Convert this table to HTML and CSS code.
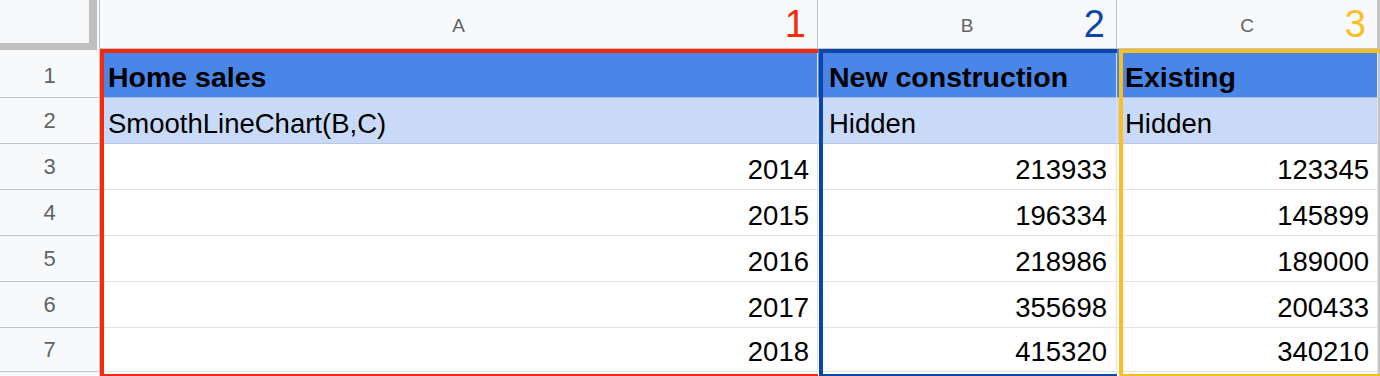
FILE: index.html
```html
<!DOCTYPE html>
<html>
<head>
<meta charset="utf-8">
<link rel="stylesheet" href="styles.css">
</head>
<body>
<div class="sheet">
  <div class="rowheads">
    <div class="corner"><div class="corner-bar"></div></div>
    <div class="rh r1">1</div>
    <div class="rh r2">2</div>
    <div class="rh r3">3</div>
    <div class="rh r4">4</div>
    <div class="rh r5">5</div>
    <div class="rh r6">6</div>
    <div class="rh r7">7</div>
    <div class="rh r8"></div>
  </div>

  <div class="col col-a">
    <div class="ch">A<span class="tag tag-red">1</span></div>
    <div class="cell r1 head">Home sales</div>
    <div class="cell r2 sub">SmoothLineChart(B,C)</div>
    <div class="cell r3 num">2014</div>
    <div class="cell r4 num">2015</div>
    <div class="cell r5 num">2016</div>
    <div class="cell r6 num">2017</div>
    <div class="cell r7 num">2018</div>
    <div class="cell r8"></div>
  </div>

  <div class="col col-b">
    <div class="ch">B<span class="tag tag-blue">2</span></div>
    <div class="cell r1 head">New construction</div>
    <div class="cell r2 sub">Hidden</div>
    <div class="cell r3 num">213933</div>
    <div class="cell r4 num">196334</div>
    <div class="cell r5 num">218986</div>
    <div class="cell r6 num">355698</div>
    <div class="cell r7 num">415320</div>
    <div class="cell r8"></div>
  </div>

  <div class="col col-c">
    <div class="ch">C<span class="tag tag-yellow">3</span></div>
    <div class="cell r1 head">Existing</div>
    <div class="cell r2 sub">Hidden</div>
    <div class="cell r3 num">123345</div>
    <div class="cell r4 num">145899</div>
    <div class="cell r5 num">189000</div>
    <div class="cell r6 num">200433</div>
    <div class="cell r7 num">340210</div>
    <div class="cell r8"></div>
  </div>

  <div class="edge"></div>
</div>
</body>
</html>
```

FILE: styles.css
```css
* { box-sizing: border-box; }

html, body {
  margin: 0;
  padding: 0;
  background: #ffffff;
  overflow: hidden;
}

body {
  width: 1380px;
  height: 376px;
  font-family: "Liberation Sans", Arial, sans-serif;
}

.sheet {
  display: flex;
  width: 1380px;
  height: 376px;
  overflow: hidden;
}

/* ---------- row headers ---------- */
.rowheads {
  width: 100px;
  flex: none;
  display: flex;
  flex-direction: column;
  background: #f8f9fa;
  border-right: 1px solid #c4c4c4;
}

.corner {
  height: 50px;
  flex: none;
  background: #f8f9fa;
}

.corner-bar {
  width: 97px;
  height: 50px;
  border-right: 8px solid #bfbfbf;
  border-bottom: 7px solid #bfbfbf;
}

.rh {
  flex: none;
  display: flex;
  align-items: center;
  justify-content: center;
  font-size: 22px;
  color: #5f6368;
  border-bottom: 1px solid #c4c4c4;
}

.rowheads .r1 { height: 48px; padding-top: 4px; }

/* ---------- shared row heights ---------- */
.r1 { height: 49px; }
.r2, .r3, .r4, .r5, .r6 { height: 46px; }
.r7 { height: 44px; }
.r8 { height: 20px; }

/* ---------- columns ---------- */
.col {
  position: relative;
  flex: none;
  display: flex;
  flex-direction: column;
}

.col-a { width: 718px; }
.col-b { width: 299px; }
.col-c { width: 261px; }

.edge {
  flex: none;
  width: 2px;
  background: #c4c4c4;
}

.ch {
  position: relative;
  height: 49px;
  flex: none;
  display: flex;
  align-items: center;
  justify-content: center;
  padding-top: 3px;
  background: #f8f9fa;
  border-right: 1px solid #c4c4c4;
  border-bottom: 1px solid #c4c4c4;
  font-size: 19px;
  color: #5f6368;
}

.tag {
  position: absolute;
  right: 11px;
  top: 2px;
  font-size: 38px;
  line-height: 44px;
}

.tag-red { color: #f7290c; }
.tag-blue { color: #0b47a8; }
.tag-yellow { color: #fbbf24; }

.cell {
  flex: none;
  display: flex;
  align-items: flex-end;
  padding: 0 8px 3px 8px;
  font-size: 27.5px;
  line-height: 32px;
  color: #000;
  background: #ffffff;
  border-bottom: 1px solid #e2e3e3;
  border-right: 1px solid #e2e3e3;
  white-space: nowrap;
}

.cell.head {
  background: #4a86e8;
  font-weight: bold;
  font-size: 28.5px;
  border-bottom-color: #a9bde0;
  padding-bottom: 4px;
}

.cell.sub {
  background: #c9daf8;
  border-bottom-color: #b9c6db;
}

.cell.num {
  justify-content: flex-end;
}

.col-b .cell { padding-left: 11px; padding-right: 9px; }
.col-c .cell { padding-left: 8px; padding-right: 8px; }

/* ---------- coloured range frames (overlay) ---------- */
.col::after {
  content: "";
  position: absolute;
  top: 49px;
  height: 321px;
  border: 4px solid transparent;
  pointer-events: none;
}

.col-a::after {
  left: 0;
  width: 718px;
  border-color: #f7290c;
}

.col-b::after {
  left: 1px;
  width: 299px;
  border-color: #0b47a8;
}

.col-c::after {
  left: 2px;
  width: 259px;
  border-color: #fbbf24;
}
```
